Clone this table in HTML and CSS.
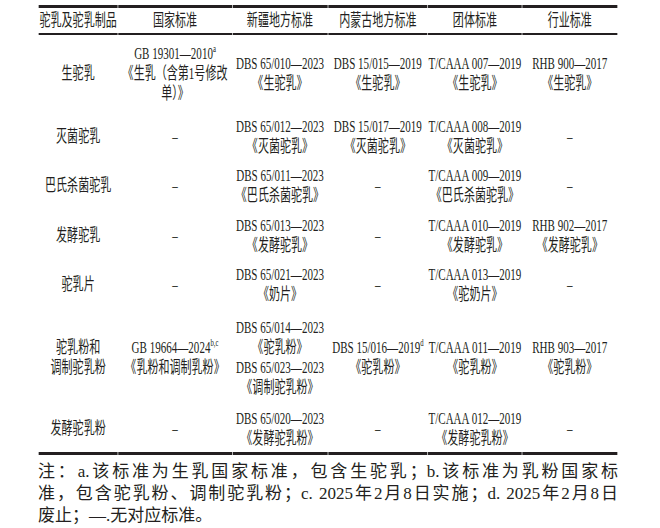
FILE: index.html
```html
<!DOCTYPE html>
<html lang="zh-CN">
<head>
<meta charset="utf-8">
<title>驼乳及驼乳制品标准</title>
<link rel="stylesheet" href="styles.css">
</head>
<body>
<div class="page">
  <div class="table-wrap">
    <table class="std">
      <colgroup>
        <col class="c1"><col class="c2"><col class="c3"><col class="c4"><col class="c5"><col class="c6">
      </colgroup>
      <thead>
        <tr class="hd">
          <th>驼乳及驼乳制品</th>
          <th>国家标准</th>
          <th>新疆地方标准</th>
          <th>内蒙古地方标准</th>
          <th>团体标准</th>
          <th>行业标准</th>
        </tr>
      </thead>
      <tbody>
        <tr class="r1">
          <td>生驼乳</td>
          <td>GB 19301—2010<sup class="fn">a</sup><br>《生乳（含第1号修改<br>单）》</td>
          <td>DBS 65/010—2023<br>《生驼乳》</td>
          <td>DBS 15/015—2019<br>《生驼乳》</td>
          <td>T/CAAA 007—2019<br>《生驼乳》</td>
          <td>RHB 900—2017<br>《生驼乳》</td>
        </tr>
        <tr class="r2">
          <td>灭菌驼乳</td>
          <td class="na">–</td>
          <td>DBS 65/012—2023<br>《灭菌驼乳》</td>
          <td>DBS 15/017—2019<br>《灭菌驼乳》</td>
          <td>T/CAAA 008—2019<br>《灭菌驼乳》</td>
          <td class="na">–</td>
        </tr>
        <tr class="r3">
          <td>巴氏杀菌驼乳</td>
          <td class="na">–</td>
          <td>DBS 65/011—2023<br>《巴氏杀菌驼乳》</td>
          <td class="na">–</td>
          <td>T/CAAA 009—2019<br>《巴氏杀菌驼乳》</td>
          <td class="na">–</td>
        </tr>
        <tr class="r4">
          <td>发酵驼乳</td>
          <td class="na">–</td>
          <td>DBS 65/013—2023<br>《发酵驼乳》</td>
          <td class="na">–</td>
          <td>T/CAAA 010—2019<br>《发酵驼乳》</td>
          <td>RHB 902—2017<br>《发酵驼乳》</td>
        </tr>
        <tr class="r5">
          <td>驼乳片</td>
          <td class="na">–</td>
          <td>DBS 65/021—2023<br>《奶片》</td>
          <td class="na">–</td>
          <td>T/CAAA 013—2019<br>《驼奶片》</td>
          <td class="na">–</td>
        </tr>
        <tr class="r6">
          <td>驼乳粉和<br>调制驼乳粉</td>
          <td>GB 19664—2024<sup class="fn">b,c</sup><br>《乳粉和调制乳粉》</td>
          <td>DBS 65/014—2023<br>《驼乳粉》<br>DBS 65/023—2023<br>《调制驼乳粉》</td>
          <td>DBS 15/016—2019<sup class="fn">d</sup><br>《驼乳粉》</td>
          <td>T/CAAA 011—2019<br>《驼乳粉》</td>
          <td>RHB 903—2017<br>《驼乳粉》</td>
        </tr>
        <tr class="r7">
          <td>发酵驼乳粉</td>
          <td class="na">–</td>
          <td>DBS 65/020—2023<br>《发酵驼乳粉》</td>
          <td class="na">–</td>
          <td>T/CAAA 012—2019<br>《发酵驼乳粉》</td>
          <td class="na">–</td>
        </tr>
      </tbody>
    </table>
  </div>
  <p class="note"><span class="ln just">注：a.该标准为生乳国家标准，包含生驼乳；b.该标准为乳粉国家标</span><span class="ln just">准，包含驼乳粉、调制驼乳粉；c. 2025年2月8日实施；d. 2025年2月8日</span><span class="ln">废止；—.无对应标准。</span></p>
</div>
</body>
</html>
```

FILE: styles.css
```css
html, body {
  margin: 0;
  padding: 0;
  overflow: hidden;
  background: #ffffff;
}

body {
  font-family: "Liberation Serif", "Noto Sans CJK SC", serif;
  color: #231f20;
}

.page {
  width: 580px;
  padding: 5px 0 0 38px;
}

.table-wrap {
  width: 580px;
}

.std {
  width: 867px;
  table-layout: fixed;
  border-collapse: separate;
  border-spacing: 1.5px 0;
  transform: scaleX(0.669);
  transform-origin: 0 0;
  font-size: 16.5px;
  line-height: 20px;
}

.std col.c1 { width: 117.5px; }
.std col.c2 { width: 169px; }
.std col.c3 { width: 141.5px; }
.std col.c4 { width: 148px; }
.std col.c5 { width: 139px; }
.std col.c6 { width: 141.5px; }

.std th,
.std td {
  padding: 0;
  text-align: center;
  vertical-align: middle;
  white-space: nowrap;
  font-weight: normal;
}

.std thead th {
  border-top: 3px solid #231f20;
  border-bottom: 2px solid #231f20;
}

.std tbody tr:last-child td {
  border-bottom: 3px solid #231f20;
}

.std tr.hd { height: 30px; }
.std tr.r1 { height: 78px; }
.std tr.r2 { height: 48px; }
.std tr.r3 { height: 50px; }
.std tr.r4 { height: 49px; }
.std tr.r5 { height: 49px; }
.std tr.r6 { height: 97px; }
.std tr.r7 { height: 49px; }

.std .fn {
  font-size: 10px;
  line-height: 0;
  vertical-align: 7px;
}

.note {
  margin: 6px 0 0;
  width: 580px;
  font-size: 17px;
  line-height: 22px;
  text-align: justify;
}

.note .ln {
  display: block;
}

.note .just {
  text-align-last: justify;
}
```
